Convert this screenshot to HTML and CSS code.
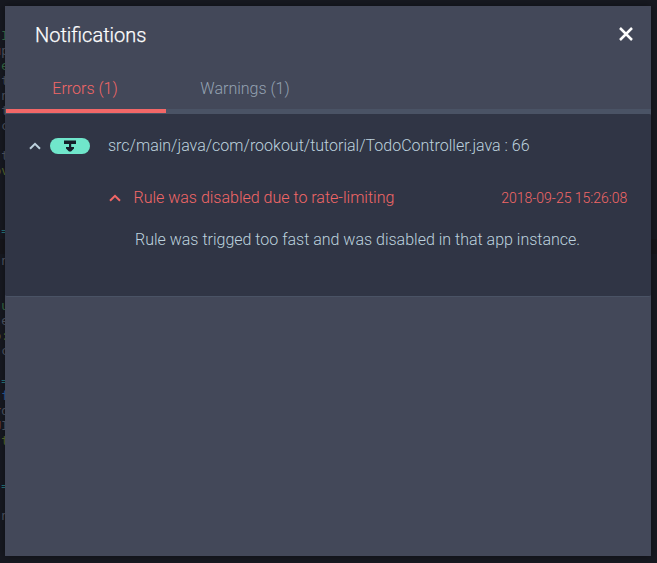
FILE: index.html
```html
<!DOCTYPE html>
<html lang="en">
<head>
<meta charset="utf-8">
<title>Notifications</title>
<link rel="stylesheet" href="styles.css">
</head>
<body>
<div class="code" aria-hidden="true">
<div class="line green"> I</div>
<div class="line"><i>u</i>p</div>
<div class="line green"> e</div>
<div class="line"> t</div>
<div class="line"> n</div>
<div class="line"> t</div>
<div class="line"><i>-</i>c</div>
<div class="line"></div>
<div class="line"> t</div>
<div class="line olive">ov</div>
<div class="line"></div>
<div class="line"></div>
<div class="line"></div>
<div class="line teal"> =</div>
<div class="line current"></div>
<div class="line"><i>-</i>n</div>
<div class="line"></div>
<div class="line"></div>
<div class="line green"> u</div>
<div class="line"> e</div>
<div class="line olive">o:</div>
<div class="line"> c</div>
<div class="line"></div>
<div class="line teal"> =</div>
<div class="line blue"> f</div>
<div class="line"><i>r</i>d</div>
<div class="line"><i>U</i>I</div>
<div class="line olive"> t</div>
<div class="line"></div>
<div class="line"></div>
<div class="line teal"> =</div>
<div class="line"></div>
<div class="line"><i>-</i>n</div>
</div>
<main class="modal">
  <header class="header">
    <h1>Notifications</h1>
    <svg class="close" viewBox="0 0 16 16"><path d="M2 2 14 14M14 2 2 14"/></svg>
  </header>
  <nav class="tabs">
    <div class="tab active">Errors (1)</div>
    <div class="tab">Warnings (1)</div>
  </nav>
  <section class="entry">
    <div class="source">
      <svg class="chevron" viewBox="0 0 12 8"><path d="M1 6.8 6 1.8 11 6.8"/></svg>
      <span class="pill"><svg viewBox="0 0 12 12"><path d="M0 .5h12v3.5H0zM5 3.5h2.2v3.5h2.8v1.6L7 11.4H5L2 8.6V7h3z"/></svg></span>
      <span class="path">src/main/java/com/rookout/tutorial/TodoController.java : 66</span>
    </div>
    <div class="error">
      <svg class="chevron" viewBox="0 0 12 8"><path d="M1 6.8 6 1.8 11 6.8"/></svg>
      <span class="title">Rule was disabled due to rate-limiting</span>
      <time>2018-09-25 15:26:08</time>
    </div>
    <p class="message">Rule was trigged too fast and was disabled in that app instance.</p>
  </section>
</main>
</body>
</html>
```
FILE: styles.css
```css
* { box-sizing: border-box; }

body {
  margin: 0;
  height: 563px;
  padding: 6px 6px 7px 5px;
  overflow: hidden;
  background: #171921;
  font: 300 16px/20px Roboto, sans-serif;
}

.code {
  position: absolute;
  inset: 29px 0 0 0;
  overflow: hidden;
  font: 12px/15px "DejaVu Sans Mono", monospace;
  color: #525866;
}

.line {
  height: 15px;
  white-space: pre;
  text-indent: -6px;
}

.line i { font-style: normal; color: #6b4a32; }
.green { color: #3a7049; }
.olive { color: #5b6d2e; }
.teal { color: #27777c; }
.blue { color: #285f9f; }
.current { background: #16161b; }

.modal {
  position: relative;
  height: 550px;
  background: #434859;
  box-shadow: 0 0 8px rgba(0, 0, 0, .4);
}

.header {
  display: flex;
  justify-content: space-between;
  height: 63px;
  padding: 17px 17px 0 30px;
}

h1 {
  margin: 0;
  font-size: 20px;
  font-weight: 300;
  line-height: 24px;
  color: #fff;
  -webkit-text-stroke: .25px #fff;
}

svg { display: block; flex: none; }

.close {
  width: 16px;
  height: 16px;
  margin-top: 3px;
  fill: none;
  stroke: #fff;
  stroke-width: 2.5;
}

.tabs {
  display: flex;
  height: 45px;
  background: linear-gradient(#4a5365, #4a5365) bottom / 100% 5px no-repeat;
}

.tab {
  width: 160px;
  height: 44px;
  padding-top: 10px;
  text-align: center;
  color: #94a2b2;
}

.tab.active {
  margin-left: 1px;
  padding-right: 2px;
  color: #f26767;
  border-bottom: 4px solid #f26767;
}

.tab:not(.active) { width: 158px; }

.entry {
  height: 183px;
  padding: 22px 23px 0 24px;
  background: #303545;
  border-bottom: 1px solid #4a5365;
  border-radius: 2px;
  color: #bdd2de;
}

.source, .error { display: flex; align-items: center; }

.chevron {
  width: 12px;
  height: 8px;
  fill: none;
  stroke: currentColor;
  stroke-width: 2;
}

.pill {
  display: grid;
  place-items: center;
  width: 40px;
  height: 16px;
  margin: 0 18px 0 9px;
  border-radius: 8px;
  background: #70e6cb;
}

.pill svg { width: 12px; height: 12px; fill: #151d29; }

.error {
  margin: 32px 0 0 80px;
  color: #f26767;
}

.title { margin-left: 12.5px; }

time { margin: 0 .7px 0 auto; font-size: 14px; }

.message { margin: 22px 0 0 106px; }
```
